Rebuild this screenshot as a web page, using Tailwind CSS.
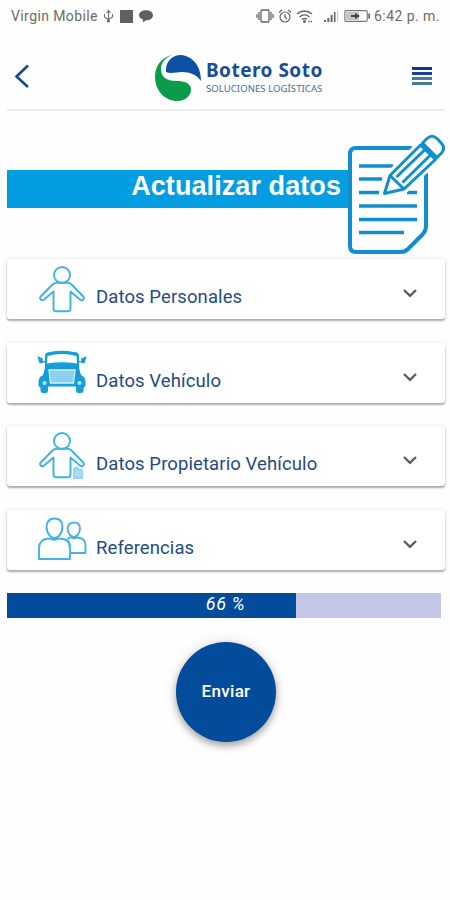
<!DOCTYPE html>
<html lang="es">
<head>
<meta charset="utf-8">
<meta name="viewport" content="width=device-width, initial-scale=1">
<title>Actualizar datos</title>
<script src="https://cdn.jsdelivr.net/npm/@tailwindcss/browser@4"></script>
</head>
<body class="bg-[#fefefe] font-[Roboto,sans-serif]">
<svg class="hidden">
  <symbol id="person" viewBox="0 0 50 50">
    <g fill="none" stroke="#3db3e3" stroke-width="1.9" stroke-linejoin="round" stroke-linecap="round">
      <circle cx="25" cy="11" r="8"/>
      <path d="M19 18.700H31Q33 18.900 34.500 20.500L46.300 32.500C48 34.700 45.500 37.300 43.300 35.700L33.500 27.500V44.500C33.500 46.200 32.400 47.300 30.700 47.300H19.300C17.600 47.300 16.500 46.200 16.500 44.500V27.500L6.700 35.700C4.500 37.300 2 34.700 3.700 32.500L15.500 20.500Q17 18.900 19 18.700z"/>
    </g>
  </symbol>
  <symbol id="chevron" viewBox="0 0 16 10">
    <path d="M2 2l6 5.800L14 2" fill="none" stroke="#5c5c5c" stroke-width="2.300"/>
  </symbol>
</svg>
<main class="w-[450px] h-[900px] overflow-hidden flex flex-col">
  <div class="h-8 shrink-0 flex items-center pl-[11px] pr-[10px] text-[#6b6b6b] text-[14px]">
    <span class="tracking-[0.4px] whitespace-nowrap w-[90px]">Virgin Mobile</span>
    <svg class="w-[11px] h-[14px] ml-[2px]" viewBox="0 0 11 14" fill="none" stroke="#707070" stroke-width="1.100"><path d="M5.500 12V2M3.500 4l2-2.500 2 2.500M1.500 5v3l4 2.500 4-2.500V5"/><circle cx="5.500" cy="12" r="1" fill="#707070"/></svg>
    <span class="w-[13px] h-[13px] bg-[#606060] ml-[6px]"></span>
    <svg class="w-[14px] h-[14px] ml-[6px]" viewBox="0 0 14 14" fill="#606060"><path d="M7 1.200c4 0 7 2 7 5s-3 5-7 5l-3 2.300v-3C1.500 9.700 0 8.200 0 6.200c0-3 3-5 7-5z"/></svg>
    <svg class="w-[18px] h-[14px] ml-auto" viewBox="0 0 18 14" fill="none" stroke="#666" stroke-width="1.300"><rect x="5" y="1" width="8" height="12" rx="1"/><path d="M3 3v8M1 5v4M15 3v8M17 5v4"/></svg>
    <svg class="w-[14px] h-[15px] ml-[4px]" viewBox="0 0 14 15" fill="none" stroke="#666" stroke-width="1.200"><circle cx="7" cy="8" r="5"/><path d="M7 5v3l2 2M1 3.500L4 1M13 3.500L10 1"/></svg>
    <svg class="w-[17px] h-[15px] ml-[4px]" viewBox="0 0 17 15" fill="none" stroke="#666" stroke-width="1.400"><path d="M1 5c4.500-4 10.500-4 15 0M3.500 8c3-2.700 7-2.700 10 0M6 10.500c1.700-1.300 3.500-1.300 5 0"/><circle cx="8.500" cy="12.500" r=".8" fill="#666"/><path d="M12 12.500h1.500M14.500 12.500H16"/></svg>
    <svg class="w-[14px] h-[14px] ml-[11px]" viewBox="0 0 14 14" fill="#666"><path d="M0 11h2v2H0zM3.300 9h2v4h-2zM6.600 6h2v7h-2zM10 3h1.500v10H10z"/><path d="M13 1h.8v12H13z" fill="#bbb"/></svg>
    <svg class="w-[27px] h-[14px] ml-[6px]" viewBox="0 0 27 14"><rect x=".8" y="1.600" width="22.500" height="10.800" rx="1.500" fill="#fff" stroke="#777" stroke-width="1.100"/><path d="M2 3h13v8H2z" fill="#c5c5c5"/><path d="M7 6h4V3.800L16 7l-5 3.200V8H7z" fill="#444"/><path d="M24.300 4.500h1.700v5h-1.700z" fill="#666"/></svg>
    <span class="ml-[3px] tracking-[0.45px] whitespace-nowrap w-[66px]">6:42 p. m.</span>
  </div>

  <header class="ml-[7px] mr-[5px] h-[79px] shrink-0 border-b-2 border-[#eeeeee] flex items-center">
    <svg class="w-[16px] h-[26px] ml-[7px] mt-[10px]" viewBox="0 0 16 26" fill="none" stroke="#144a91" stroke-width="2.600"><path d="M14 2.500L2.500 13.500L14 24"/></svg>
    <div class="flex items-center ml-[124px] mt-[14px]">
      <svg class="w-[48px] h-[48px]" viewBox="0 0 48 48">
        <path d="M18 1C8 3 1 12 1 22.500C1 37 11 47 23.500 47C31 47 37 42 37 35.500C37 29 30 27 23 27C14 27 7 24 7 15C7 8 12 3.500 18 1z" fill="#0b9c49"/>
        <path d="M12 18C11 8 18 1 27 1C38 2 47 11 47 27C43 21 36 18 28 18C22 18 17 20 12 18z" fill="#0d51a5"/>
      </svg>
      <div class="ml-[4px] pb-[4px] flex flex-col font-['Noto_Sans',sans-serif]">
        <span class="text-[19px] leading-[25px] font-bold text-[#174d9d] whitespace-nowrap tracking-[0.48px]">Botero Soto</span>
        <span class="text-[9.500px] leading-[11px] tracking-[0.08px] text-[#3d6ca5] whitespace-nowrap">SOLUCIONES LOGÍSTICAS</span>
      </div>
    </div>
    <div class="ml-auto mr-[13px] mt-[10px] w-[20px] flex flex-col gap-[2px]">
      <i class="h-[3px] bg-[#16358d]"></i><i class="h-[3px] bg-[#174784]"></i><i class="h-[3px] bg-[#4a7ba0]"></i><i class="h-[3px] bg-[#4d779f]"></i>
    </div>
  </header>

  <section class="h-[148px] shrink-0 pl-[7px] flex">
    <div class="mt-[59px] h-[38px] w-[342px] bg-[#039ee2] flex items-start justify-end pr-[8px]">
      <h1 class="font-['Liberation_Sans',Arial,sans-serif] font-bold text-[27px] tracking-[0.08px] leading-[32px] text-white whitespace-nowrap">Actualizar datos</h1>
    </div>
    <svg class="w-[101px] h-[123px] mt-[22px] -ml-[2px] shrink-0" viewBox="347 133 101 123" fill="none" stroke="#108fce" stroke-width="4" stroke-linejoin="round">
      <path d="M412 148H356Q350 148 350 154V246Q350 252 356 252H401Q405 252 408 249L422 235Q426 231 426 226V173" fill="#fefefe"/>
      <path d="M359 166H393M359 179H382M359 192.500H379M407 192.500H417M359 206H417M359 219.500H417M359 232.500H404" stroke-width="3.500"/>
      <path d="M384.500 193.500L390 175.500L422 143.500Q424 141 426 139.500Q431 134.500 437 139.500L442 145Q446 150 441 155L435 159L404 189z" fill="#fefefe" stroke="#fefefe" stroke-width="9"/>
      <path d="M384.500 193.500L390 175.500L420.500 145L435.500 159.500L404 189zM390 175.500L404 189M396.500 177L425 149.500M402.500 182.500L431 154.500M422.500 143L427 138.500Q432 134 437 138.500L442 144Q445.500 148.500 441.500 153L437 157.500z" stroke-width="3"/>
    </svg>
  </section>

  <section class="pl-[7px] pr-[5px] flex flex-col gap-[23.700px] shrink-0 text-[#244b84] text-[18.500px]">
    <div class="h-[60px] rounded-[3px] bg-white shadow-[0_2px_2px_rgba(0,0,0,.3),0_0_4px_rgba(0,0,0,.1)] flex items-center pl-[30px] pr-[27px]">
      <svg class="w-[50px] h-[50px]"><use href="#person"/></svg>
      <span class="ml-[9px] mt-[17px] tracking-[0.1px] whitespace-nowrap">Datos Personales</span>
      <svg class="w-4 h-[10px] ml-auto mt-[8px]"><use href="#chevron"/></svg>
    </div>
    <div class="h-[60px] rounded-[3px] bg-white shadow-[0_2px_2px_rgba(0,0,0,.3),0_0_4px_rgba(0,0,0,.1)] flex items-center pl-[30px] pr-[27px]">
      <svg class="w-[50px] h-[50px]" viewBox="0 0 50 50">
        <path d="M8 20V8Q8 4 13 4Q25 1.500 37 4Q42 4 42 8V20L44 27Q48.500 29 48.500 34V38L46.500 40V43Q46 45 44 45H41Q39 45 39 42V38.500H11V42Q11 45 9 45H6Q3.500 45 3.500 42V40L1.500 38V34Q1.500 29 6 27z" fill="#159fda"/>
        <path d="M10.500 8Q25 4 39.500 8L40 15.500Q25 13 10 15.500z" fill="#fff"/>
        <path d="M1.500 9.500L5 11V14.500H3zM48.500 9.500L45 11V14.500H47zM4 13L9 14M46 13L41 14" fill="#159fda" stroke="#159fda" stroke-width="1.500"/>
        <path d="M12 22H38L36.500 35H13.500z" fill="#80ccec" stroke="#d8f0fa" stroke-width="1.300"/>
        <path d="M14 24.500H36M14 27H36M14 29.500H36M14 32H36" stroke="#a6dcf3" stroke-width=".7"/>
        <circle cx="7.500" cy="35" r="2" fill="#c7eafa"/><circle cx="42.500" cy="35" r="2" fill="#c7eafa"/>
      </svg>
      <span class="ml-[9px] mt-[18px] tracking-[0.1px] whitespace-nowrap">Datos Vehículo</span>
      <svg class="w-4 h-[10px] ml-auto mt-[8px]"><use href="#chevron"/></svg>
    </div>
    <div class="h-[60px] rounded-[3px] bg-white shadow-[0_2px_2px_rgba(0,0,0,.3),0_0_4px_rgba(0,0,0,.1)] flex items-center pl-[30px] pr-[27px]">
      <svg class="w-[50px] h-[50px] -mt-[2px]" viewBox="0 0 50 50"><use href="#person"/><path d="M36 38L40 36L43 39H46V49H36z" fill="#9bd5f0"/><path d="M38 42H44M38 45H44" stroke="#c9e9f8" stroke-width="1"/></svg>
      <span class="ml-[9px] mt-[17px] tracking-[0.1px] whitespace-nowrap">Datos Propietario Vehículo</span>
      <svg class="w-4 h-[10px] ml-auto mt-[8px]"><use href="#chevron"/></svg>
    </div>
    <div class="h-[60px] rounded-[3px] bg-white shadow-[0_2px_2px_rgba(0,0,0,.3),0_0_4px_rgba(0,0,0,.1)] flex items-center pl-[30px] pr-[27px]">
      <svg class="w-[50px] h-[50px] -mt-[2px]" viewBox="0 0 50 50" fill="none" stroke="#43b4e2" stroke-width="1.900" stroke-linejoin="round">
        <path d="M13 22Q9.500 18 9.500 13Q10 4.500 17.500 4.500Q25.500 4.500 25.500 13Q25.500 18 22 22Q17.500 26 13 22zM12 24.500Q2 25 2 34V45H33V34Q33 25 23 24.500Q17.500 27 12 24.500z"/>
        <path d="M33 21Q30.500 18 30.500 14.500Q31 8.500 37 8.500Q43 8.500 43 14.500Q43 18 40.500 21Q37 25 33 21zM30 25L34 23Q37 25.500 40 23.500Q48.500 24 48.500 31V39H34M31 26L33 31"/>
      </svg>
      <span class="ml-[9px] mt-[17px] tracking-[0.1px] whitespace-nowrap">Referencias</span>
      <svg class="w-4 h-[10px] ml-auto mt-[8px]"><use href="#chevron"/></svg>
    </div>
  </section>

  <div class="ml-[7px] mt-[23px] w-[434px] h-[25px] shrink-0 grid bg-[#c5c7e7]">
    <div class="col-start-1 row-start-1 bg-[#034b9b]" style="width:66.6%"></div>
    <span class="col-start-1 row-start-1 pl-[3px] text-center text-white italic text-[18px] leading-[21px] tracking-[0.7px]">66 %</span>
  </div>
  <button class="mt-[24px] ml-[176px] w-[100px] h-[100px] shrink-0 rounded-full bg-[#034b9b] text-white text-[17px] font-medium tracking-[0.3px] shadow-[0_4px_7px_rgba(0,0,0,.3),0_0_14px_rgba(0,0,0,.12)]">Enviar</button>
</main>
</body>
</html>
